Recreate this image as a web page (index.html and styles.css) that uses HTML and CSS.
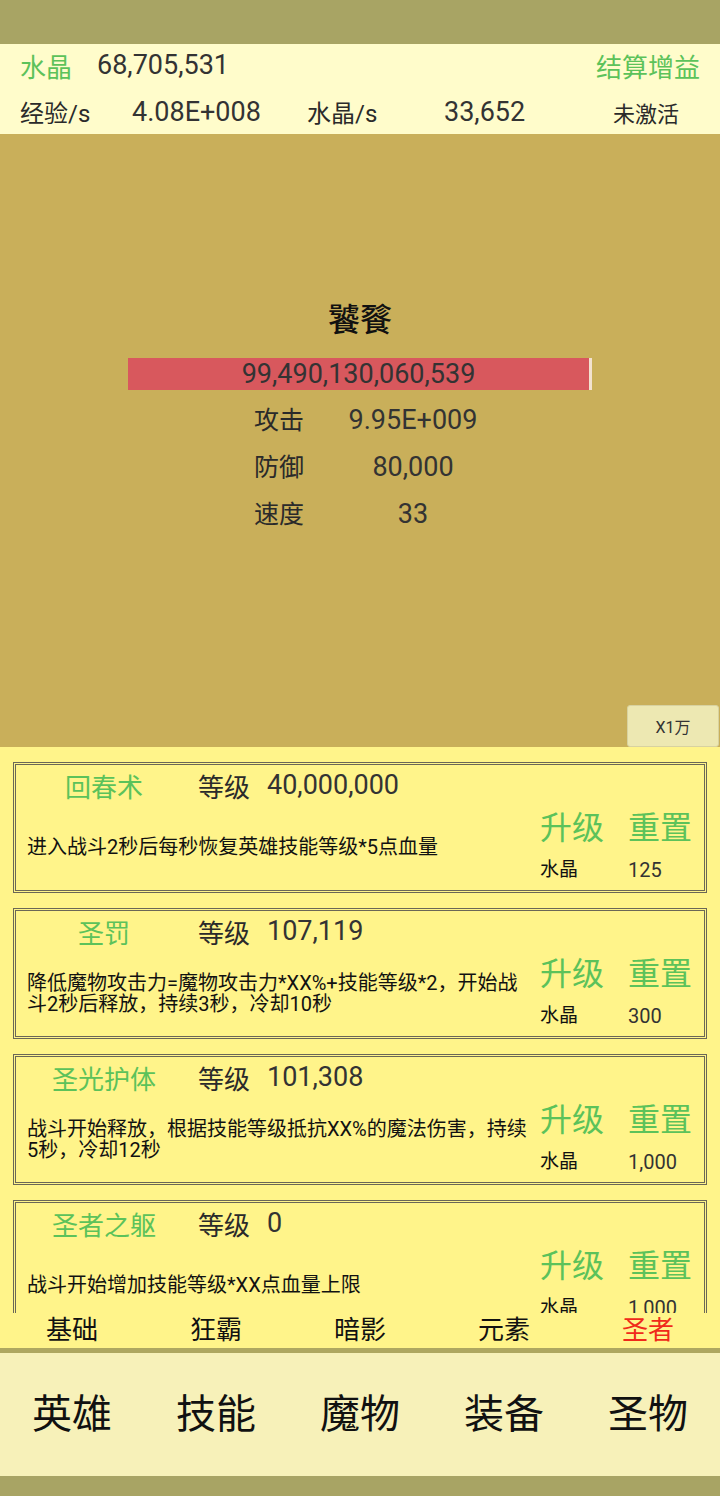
FILE: index.html
```html
<!DOCTYPE html>
<html lang="zh-CN">
<head>
<meta charset="UTF-8" />
<meta name="viewport" content="width=device-width, initial-scale=1" />
<title>技能</title>
<link rel="stylesheet" href="styles.css">
</head>
<body>

<div class="top-band"></div>

<header class="res-bar">
  <div class="res-row">
    <span class="green res-label">水晶</span>
    <span class="num">68,705,531</span>
    <span class="green res-right">结算增益</span>
  </div>
  <div class="res-row rates">
    <span>经验/s</span>
    <span class="num">4.08E+008</span>
    <span>水晶/s</span>
    <span class="num">33,652</span>
    <span class="inactive">未激活</span>
  </div>
</header>

<section class="battle">
  <h2 class="boss-name">饕餮</h2>
  <div class="hp-bar"><span class="num">99,490,130,060,539</span></div>
  <div class="stats">
    <span>攻击</span><span class="num">9.95E+009</span>
    <span>防御</span><span class="num">80,000</span>
    <span>速度</span><span class="num">33</span>
  </div>
  <button class="speed-btn">X1万</button>
</section>

<main class="skill-list">
  <div class="skill">
    <div class="skill-head">
      <span class="skill-name green">回春术</span>
      <span class="lv-label">等级</span>
      <span class="num">40,000,000</span>
    </div>
    <div class="skill-desc">进入战斗2秒后每秒恢复英雄技能等级*5点血量</div>
    <div class="skill-side">
      <span class="green act">升级</span><span class="green act">重置</span>
      <span class="cost">水晶</span><span class="cost num">125</span>
    </div>
  </div>

  <div class="skill">
    <div class="skill-head">
      <span class="skill-name green">圣罚</span>
      <span class="lv-label">等级</span>
      <span class="num">107,119</span>
    </div>
    <div class="skill-desc">降低魔物攻击力=魔物攻击力*XX%+技能等级*2，开始战斗2秒后释放，持续3秒，冷却10秒</div>
    <div class="skill-side">
      <span class="green act">升级</span><span class="green act">重置</span>
      <span class="cost">水晶</span><span class="cost num">300</span>
    </div>
  </div>

  <div class="skill">
    <div class="skill-head">
      <span class="skill-name green">圣光护体</span>
      <span class="lv-label">等级</span>
      <span class="num">101,308</span>
    </div>
    <div class="skill-desc">战斗开始释放，根据技能等级抵抗XX%的魔法伤害，持续5秒，冷却12秒</div>
    <div class="skill-side">
      <span class="green act">升级</span><span class="green act">重置</span>
      <span class="cost">水晶</span><span class="cost num">1,000</span>
    </div>
  </div>

  <div class="skill">
    <div class="skill-head">
      <span class="skill-name green">圣者之躯</span>
      <span class="lv-label">等级</span>
      <span class="num">0</span>
    </div>
    <div class="skill-desc">战斗开始增加技能等级*XX点血量上限</div>
    <div class="skill-side">
      <span class="green act">升级</span><span class="green act">重置</span>
      <span class="cost">水晶</span><span class="cost num">1,000</span>
    </div>
  </div>
</main>

<nav class="sub-tabs">
  <span>基础</span>
  <span>狂霸</span>
  <span>暗影</span>
  <span>元素</span>
  <span class="active">圣者</span>
</nav>

<nav class="main-nav">
  <span>英雄</span>
  <span>技能</span>
  <span>魔物</span>
  <span>装备</span>
  <span>圣物</span>
</nav>

<div class="bottom-band"></div>

</body>
</html>
```

FILE: styles.css
```css
body { margin: 0; height: 1496px; display: flex; flex-direction: column; font-family: Roboto, "Noto Sans CJK SC", sans-serif; color: #2a2a2a; background: #a8a464; overflow: hidden; }
.num { font-family: Roboto, "Noto Sans CJK SC", sans-serif; color: #333; }
.green { color: #5cc25a; }

.top-band { height: 44px; background: #a8a464; flex: none; }
.bottom-band { height: 20px; background: #a8a464; flex: none; }

/* barra de recursos */
.res-bar { height: 90px; background: #fffccb; flex: none; padding: 0 20px; box-sizing: border-box; }
.res-row { height: 45px; display: flex; align-items: center; font-size: 25px; }
.res-row:first-child { padding-bottom: 3px; box-sizing: border-box; }
.res-label { width: 77px; font-size: 26px; }
.res-row .num { font-size: 27px; }
.res-right { margin-left: auto; font-size: 26px; }
.rates { display: grid; grid-template-columns: 112px 175px 137px 169px 1fr; font-size: 24px; }
.rates .num { font-size: 27px; }
.rates .inactive { font-size: 22px; }

/* area da batalha */
.battle { height: 613px; background: #c9af5a; flex: none; display: flex; flex-direction: column; align-items: center; padding-top: 166px; box-sizing: border-box; }
.boss-name { margin: 0; font-size: 32px; line-height: 40px; font-weight: 500; color: #111; }
.hp-bar { margin-top: 18px; width: 464px; height: 32px; box-sizing: border-box; background: #d8585d; border-right: 3px solid #f2e2cf; text-align: center; font-size: 27px; line-height: 32px; }
.stats { margin-top: 7px; align-self: flex-start; margin-left: 254px; display: grid; grid-template-columns: 90px 138px; font-size: 27px; line-height: 47px; }
.stats span:nth-child(odd) { font-size: 25px; }
.stats .num { text-align: center; }
.speed-btn { margin-top: auto; align-self: flex-end; margin-right: 1px; width: 92px; height: 42px; background: #ede8b2; border: 1px solid #d8d2a0; border-radius: 3px; font-family: Roboto, "Noto Sans CJK SC", sans-serif; font-size: 16px; color: #333; }

/* lista de habilidades */
.skill-list { height: 566px; background: #fff48a; flex: none; padding: 15px 13px 0; box-sizing: border-box; display: flex; flex-direction: column; gap: 15px; overflow: hidden; }
.skill { flex: none; height: 131px; box-sizing: border-box; border: 3px double #6b6756; display: grid; grid-template-columns: 513px 1fr; grid-template-rows: 40px 1fr; padding-left: 11px; }
.skill-head { display: flex; align-items: center; font-size: 26px; }
.skill-name { width: 154px; text-align: center; }
.lv-label { margin-left: 17px; width: 69px; }
.skill-head .num { font-size: 27px; }
.skill-desc { grid-column: 1; grid-row: 2; align-self: center; font-size: 20px; line-height: 21px; color: #111; padding-right: 4px; }
.skill-side { grid-column: 2; grid-row: 1 / 3; display: grid; grid-template-columns: 88px 1fr; grid-template-rows: 40px 44px; padding-top: 43px; }
.act { font-size: 32px; line-height: 40px; }
.cost { font-size: 19px; line-height: 44px; color: #111; }
.cost.num { font-size: 20px; color: #333; }

/* abas */
.sub-tabs { height: 35px; background: #fff48a; flex: none; display: grid; grid-template-columns: repeat(5, 1fr); align-items: center; text-align: center; font-size: 26px; line-height: 35px; color: #111; border-bottom: 5px solid #aea760; }
.sub-tabs .active { color: #f02a1a; }
.main-nav { height: 123px; background: #f7f1b9; flex: none; display: grid; grid-template-columns: repeat(5, 1fr); align-items: center; text-align: center; font-size: 40px; color: #111; padding-bottom: 8px; box-sizing: border-box; }
```
